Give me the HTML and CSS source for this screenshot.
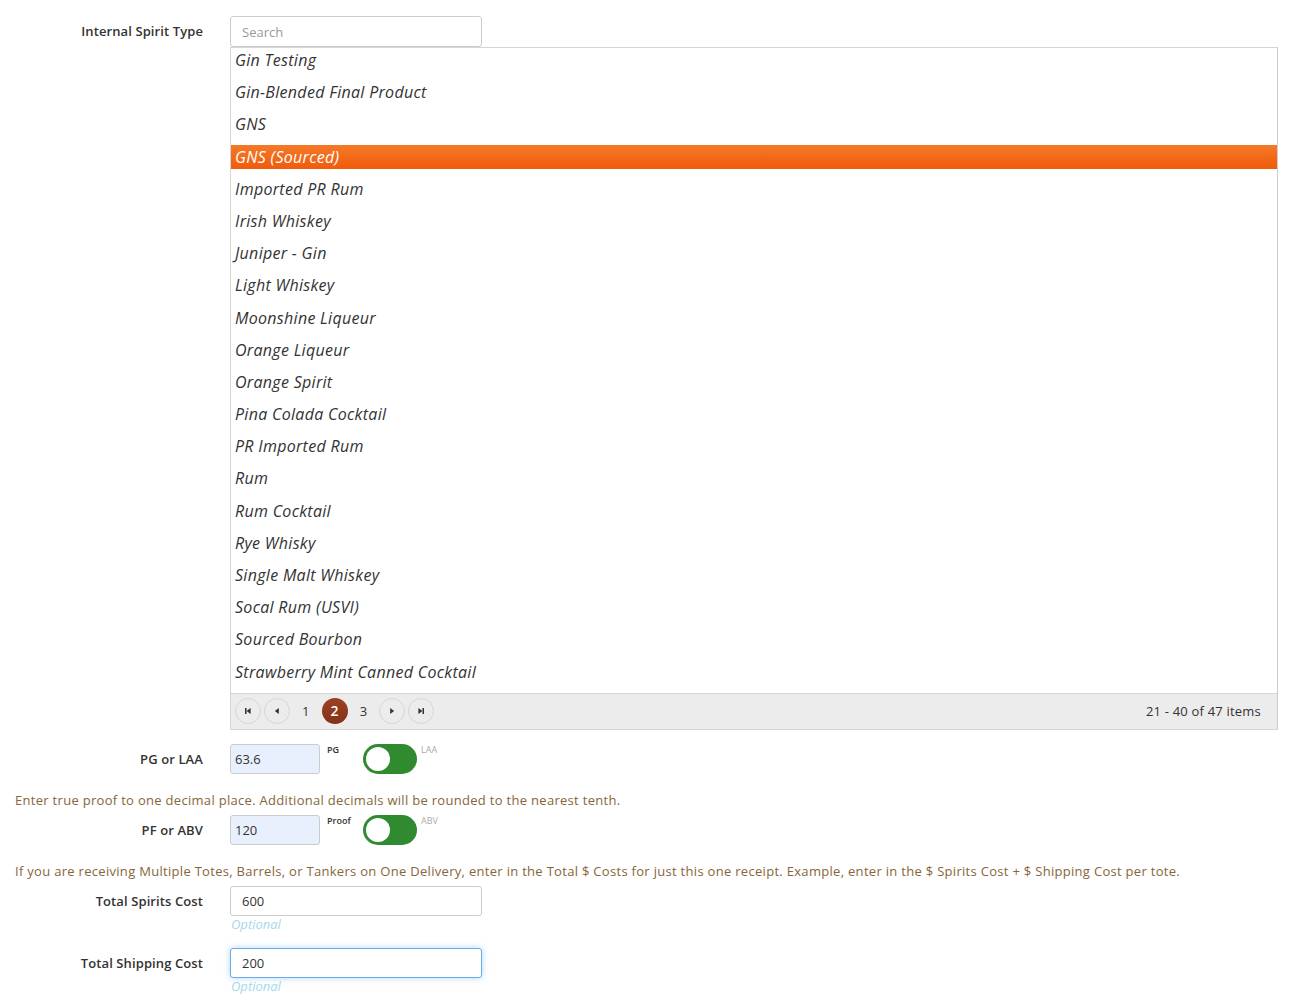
FILE: index.html
```html
<!DOCTYPE html>
<html lang="en">
<head>
    <meta charset="UTF-8">
    <meta name="viewport" content="width=device-width, initial-scale=1.0">
    <title>Receipt - Spirit Type</title>
    <link rel="stylesheet" href="styles.css">
</head>
<body>
    <form class="receipt-form">
        <div class="form-row row-type">
            <label class="row-label">Internal Spirit Type</label>
            <div class="row-control">
                <input type="text" class="text-input search-input" placeholder="Search">
                <div class="list-box">
                    <ul class="spirit-list">
                        <li>Gin Testing</li>
                        <li>Gin-Blended Final Product</li>
                        <li>GNS</li>
                        <li class="selected">GNS (Sourced)</li>
                        <li>Imported PR Rum</li>
                        <li>Irish Whiskey</li>
                        <li>Juniper - Gin</li>
                        <li>Light Whiskey</li>
                        <li>Moonshine Liqueur</li>
                        <li>Orange Liqueur</li>
                        <li>Orange Spirit</li>
                        <li>Pina Colada Cocktail</li>
                        <li>PR Imported Rum</li>
                        <li>Rum</li>
                        <li>Rum Cocktail</li>
                        <li>Rye Whisky</li>
                        <li>Single Malt Whiskey</li>
                        <li>Socal Rum (USVI)</li>
                        <li>Sourced Bourbon</li>
                        <li>Strawberry Mint Canned Cocktail</li>
                    </ul>
                    <div class="pager">
                        <div class="pager-nav">
                            <a class="pager-btn" title="First page">
                                <svg width="8" height="8" viewBox="0 0 8 8"><rect x="1" y="1" width="1.5" height="6" fill="#333"/><polygon points="6.6,1 2.6,4 6.6,7" fill="#333"/></svg>
                            </a>
                            <a class="pager-btn" title="Previous page">
                                <svg width="8" height="8" viewBox="0 0 8 8"><polygon points="5.8,1 1.9,4 5.8,7" fill="#333"/></svg>
                            </a>
                            <a class="pager-num">1</a>
                            <a class="pager-num current">2</a>
                            <a class="pager-num">3</a>
                            <a class="pager-btn" title="Next page">
                                <svg width="8" height="8" viewBox="0 0 8 8"><polygon points="2.2,1 6.1,4 2.2,7" fill="#333"/></svg>
                            </a>
                            <a class="pager-btn" title="Last page">
                                <svg width="8" height="8" viewBox="0 0 8 8"><polygon points="1.4,1 5.4,4 1.4,7" fill="#333"/><rect x="5.5" y="1" width="1.5" height="6" fill="#333"/></svg>
                            </a>
                        </div>
                        <span class="pager-info">21 - 40 of 47 items</span>
                    </div>
                </div>
            </div>
        </div>

        <div class="form-row row-switch">
            <label class="row-label">PG or LAA</label>
            <div class="row-control switch-control">
                <input type="text" class="text-input short-input" value="63.6">
                <span class="switch-on">PG</span>
                <span class="switch"><span class="knob"></span></span>
                <span class="switch-off">LAA</span>
            </div>
        </div>

        <p class="help-text">Enter true proof to one decimal place. Additional decimals will be rounded to the nearest tenth.</p>

        <div class="form-row row-switch">
            <label class="row-label">PF or ABV</label>
            <div class="row-control switch-control">
                <input type="text" class="text-input short-input" value="120">
                <span class="switch-on">Proof</span>
                <span class="switch"><span class="knob"></span></span>
                <span class="switch-off">ABV</span>
            </div>
        </div>

        <p class="help-text">If you are receiving Multiple Totes, Barrels, or Tankers on One Delivery, enter in the Total $ Costs for just this one receipt. Example, enter in the $ Spirits Cost + $ Shipping Cost per tote.</p>

        <div class="form-row row-cost">
            <label class="row-label">Total Spirits Cost</label>
            <div class="row-control">
                <input type="text" class="text-input cost-input" value="600">
                <span class="hint">Optional</span>
            </div>
        </div>

        <div class="form-row row-cost">
            <label class="row-label">Total Shipping Cost</label>
            <div class="row-control">
                <input type="text" class="text-input cost-input focused" value="200">
                <span class="hint">Optional</span>
            </div>
        </div>
    </form>
</body>
</html>
```

FILE: styles.css
```css
body {
    font-family: "Open Sans", "Liberation Sans", sans-serif;
    margin: 0;
    padding: 0;
    background-color: #fff;
    color: #333;
}

.receipt-form {
    padding: 16px 20px 0 15px;
}

.form-row {
    display: grid;
    grid-template-columns: 188px 1fr;
    column-gap: 27px;
    align-items: start;
}

.row-label {
    text-align: right;
    font-size: 13px;
    font-weight: 600;
    color: #333;
    line-height: 30px;
    letter-spacing: 0.1px;
}

.row-control {
    min-width: 0;
}

.text-input {
    box-sizing: border-box;
    height: 30px;
    border: 1px solid #ccc;
    border-radius: 3px;
    font-family: inherit;
    font-size: 13px;
    color: #333;
    padding: 0 11px;
    outline: none;
    display: block;
}

.search-input {
    width: 252px;
    height: 31px;
}

.search-input::placeholder {
    color: #999;
}

/* list with pager */
.list-box {
    border: 1px solid #d5d5d5;
    border-right-color: #ccc;
}

.spirit-list {
    list-style: none;
    margin: 0;
    padding: 0 0 1px;
}

.spirit-list li {
    height: 24px;
    line-height: 24px;
    margin-bottom: 8.2px;
    padding-left: 4px;
    font-size: 16px;
    font-style: italic;
    color: #333;
    letter-spacing: 0.3px;
}

.spirit-list li.selected {
    background: linear-gradient(#f47a28, #f15a0b);
    color: #fff;
}

.pager {
    display: flex;
    align-items: center;
    justify-content: space-between;
    height: 35px;
    background: #ececec;
    border-top: 1px solid #d5d5d5;
    padding: 0 16px 0 4px;
}

.pager-nav {
    display: flex;
    align-items: center;
    gap: 2.85px;
}

.pager-btn {
    box-sizing: border-box;
    width: 26px;
    height: 26px;
    border: 1px solid #d6d6d6;
    border-radius: 50%;
    display: flex;
    align-items: center;
    justify-content: center;
}

.pager-num {
    width: 26px;
    height: 26px;
    line-height: 26px;
    text-align: center;
    font-size: 13px;
    color: #333;
}

.pager-num.current {
    border-radius: 50%;
    background: linear-gradient(#9c4121, #823219);
    color: #fff;
    font-weight: 600;
    font-size: 14px;
}

.pager-info {
    font-size: 13px;
    color: #333;
    letter-spacing: 0.2px;
}

/* switches */
.row-switch {
    margin-top: 14px;
}

.switch-control {
    display: flex;
    align-items: flex-start;
}

.short-input {
    width: 90px;
    background: #e8f0fe;
    padding: 0 4px;
}

.switch-on {
    width: 36px;
    margin-left: 7px;
    font-size: 9px;
    font-weight: 600;
    color: #333;
    line-height: 12px;
}

.switch {
    position: relative;
    width: 54px;
    height: 30px;
    border-radius: 15px;
    background: #2f8a30;
}

.switch .knob {
    position: absolute;
    left: 3px;
    top: 3px;
    width: 24px;
    height: 24px;
    border-radius: 50%;
    background: #fff;
}

.switch-off {
    margin-left: 4px;
    font-size: 9px;
    color: #aaa;
    line-height: 12px;
}

.help-text {
    margin: 17px 0 0;
    font-size: 13px;
    line-height: 18px;
    font-weight: 500;
    color: #86663a;
    letter-spacing: 0.3px;
}

.row-switch + .help-text + .row-switch {
    margin-top: 6px;
}

.help-text + .row-cost {
    margin-top: 6px;
}

.row-cost + .row-cost {
    margin-top: 15px;
}

.cost-input {
    width: 252px;
}

.cost-input.focused {
    border-color: #66afe9;
    box-shadow: 0 0 6px rgba(102, 175, 233, 0.5);
}

.hint {
    display: block;
    padding-left: 1px;
    font-size: 13px;
    line-height: 17px;
    font-style: italic;
    color: #a6d8ea;
}
```
